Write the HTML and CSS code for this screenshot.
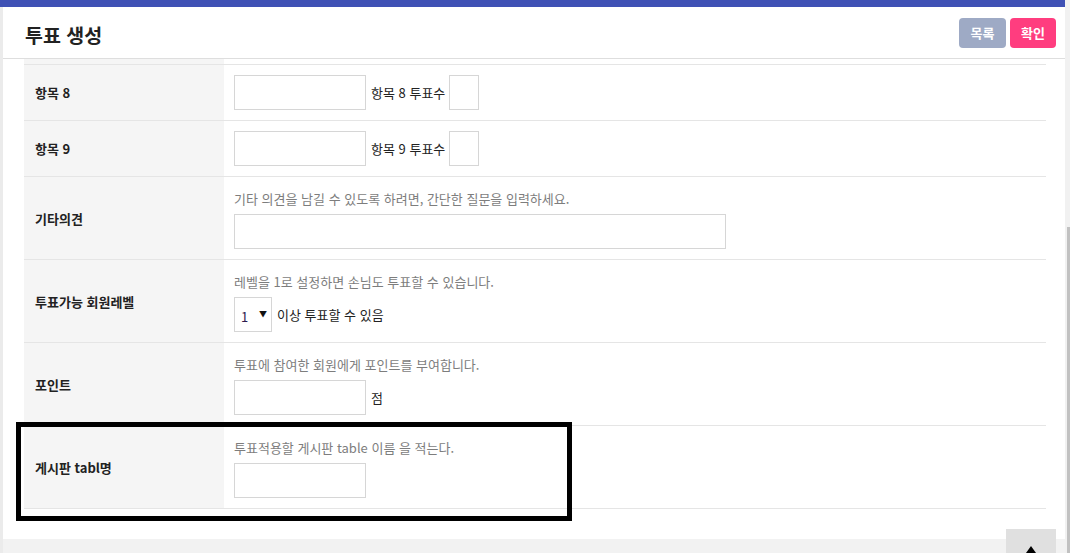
FILE: index.html
```html
<!DOCTYPE html>
<html lang="ko">
<head>
    <meta charset="UTF-8">
    <title>투표 생성</title>
    <link rel="stylesheet" href="styles.css">
</head>
<body>
    <div class="frame">
        <div class="main">
            <div class="topbar"></div>
            <div class="page">
                <header class="page-head">
                    <h1>투표 생성</h1>
                    <div class="actions">
                        <button class="btn btn-list">목록</button>
                        <button class="btn btn-ok">확인</button>
                    </div>
                </header>

                <div class="content">
                    <table class="form-table">
                        <tr class="sliver"><th></th><td></td></tr>
                        <tr>
                            <th>항목 8</th>
                            <td>
                                <div class="field">
                                    <input type="text" class="inp">
                                    <span>항목 8 투표수</span>
                                    <input type="text" class="inp inp-sm">
                                </div>
                            </td>
                        </tr>
                        <tr>
                            <th>항목 9</th>
                            <td>
                                <div class="field">
                                    <input type="text" class="inp">
                                    <span>항목 9 투표수</span>
                                    <input type="text" class="inp inp-sm">
                                </div>
                            </td>
                        </tr>
                        <tr class="help-row">
                            <th>기타의견</th>
                            <td>
                                <p class="help">기타 의견을 남길 수 있도록 하려면, 간단한 질문을 입력하세요.</p>
                                <input type="text" class="inp inp-wide">
                            </td>
                        </tr>
                        <tr class="help-row">
                            <th>투표가능 회원레벨</th>
                            <td>
                                <p class="help">레벨을 1로 설정하면 손님도 투표할 수 있습니다.</p>
                                <div class="field">
                                    <span class="select-wrap">
                                        <select class="sel">
                                            <option>1</option>
                                            <option>2</option>
                                        </select>
                                    </span>
                                    <span>이상 투표할 수 있음</span>
                                </div>
                            </td>
                        </tr>
                        <tr class="help-row">
                            <th>포인트</th>
                            <td>
                                <p class="help">투표에 참여한 회원에게 포인트를 부여합니다.</p>
                                <div class="field">
                                    <input type="text" class="inp">
                                    <span>점</span>
                                </div>
                            </td>
                        </tr>
                        <tr class="help-row">
                            <th>게시판 tabl명</th>
                            <td>
                                <p class="help">투표적용할 게시판 table 이름 을 적는다.</p>
                                <input type="text" class="inp">
                            </td>
                        </tr>
                    </table>
                </div>

                <footer class="foot"></footer>
            </div>
        </div>
        <div class="scrollbar"><div class="thumb"></div></div>
    </div>

    <!-- annotation box drawn over the last row -->
    <div class="mark"></div>

    <a class="to-top" href="#"><span class="tri"></span></a>
</body>
</html>
```

FILE: styles.css
```css
:root {
    --brand-blue: #3f51b5;
    --line: #e5e5e5;
    --head-bg: #f5f5f5;
    --input-border: #d6d6d6;
    --help-text: #7d7d7d;
    --text-dark: #222;
}

body {
    margin: 0;
    font-family: "Noto Sans CJK KR", "Noto Sans", sans-serif;
    font-size: 13px;
    color: var(--text-dark);
    background: #fff;
    overflow: hidden;
}

.frame {
    display: flex;
    height: 553px;
}

.main {
    flex: 1;
    display: flex;
    flex-direction: column;
    min-width: 0;
}

.topbar {
    height: 7px;
    background: var(--brand-blue);
}

.page {
    flex: 1;
    display: flex;
    flex-direction: column;
    border-left: 3px solid #ebebeb;
}

.page-head {
    height: 51px;
    border-bottom: 1px solid #dedede;
    display: flex;
    align-items: center;
    justify-content: space-between;
    padding: 0 9px 0 22px;
}

.page-head h1 {
    margin: 3px 0 0;
    font-size: 19.5px;
    font-weight: bold;
    color: #222;
}

.actions {
    display: flex;
    gap: 4px;
}

.btn {
    height: 30px;
    padding: 0;
    border: none;
    border-radius: 4px;
    color: #fff;
    font-family: inherit;
    font-size: 13px;
    font-weight: bold;
    cursor: pointer;
}

.btn-list {
    background: #9eaac5;
    width: 47px;
}

.btn-ok {
    background: #ff3d7f;
    width: 46px;
}

.content {
    padding: 0 19px 30px 21px;
}

.form-table {
    width: 100%;
    border-collapse: collapse;
}

.form-table tr {
    border-bottom: 1px solid var(--line);
}

.form-table th {
    width: 178px;
    padding: 0 11px;
    background: var(--head-bg);
    text-align: left;
    font-weight: bold;
    vertical-align: middle;
}

.form-table td {
    padding: 10px;
}

.form-table .help-row td {
    padding: 12px 10px 10px;
}

.form-table .sliver th,
.form-table .sliver td {
    height: 5px;
    padding: 0;
}

.field {
    display: flex;
    align-items: center;
    gap: 5px;
}

.help {
    margin: 0 0 5px;
    line-height: 20px;
    color: var(--help-text);
}

.inp {
    display: block;
    box-sizing: border-box;
    width: 132px;
    height: 35px;
    border: 1px solid var(--input-border);
    background: #fff;
    margin: 0;
}

.inp-sm {
    width: 30px;
    margin-left: -1px;
}

.inp-wide {
    width: 492px;
}

.select-wrap {
    position: relative;
    display: block;
}

.select-wrap::after {
    content: "▼";
    position: absolute;
    right: 5px;
    top: 11px;
    font-size: 8px;
    color: #111;
    pointer-events: none;
}

.sel {
    appearance: none;
    -webkit-appearance: none;
    box-sizing: border-box;
    width: 38px;
    height: 35px;
    padding: 3px 0 0 6px;
    border: 1px solid var(--input-border);
    border-radius: 0;
    background: #fff;
    font-family: inherit;
    font-size: 13px;
    color: #2d1b4e;
}

.foot {
    flex: 1;
    background: #f2f2f2;
}

.scrollbar {
    width: 5px;
    box-sizing: border-box;
    padding-left: 2px;
    background: #f1f1f1;
    display: flex;
    flex-direction: column;
}

.thumb {
    margin-top: 227px;
    flex: 1;
    background: #c1c1c1;
}

.mark {
    position: absolute;
    left: 16px;
    top: 422px;
    width: 556px;
    height: 99px;
    box-sizing: border-box;
    border: 5px solid #000;
}

.to-top {
    position: fixed;
    left: 1006px;
    top: 529px;
    width: 50px;
    height: 34px;
    background: #e0e0e0;
    display: flex;
    justify-content: center;
}

.to-top .tri {
    margin-top: 17px;
    width: 0;
    height: 0;
    border-left: 5px solid transparent;
    border-right: 5px solid transparent;
    border-bottom: 7px solid #000;
}
```
